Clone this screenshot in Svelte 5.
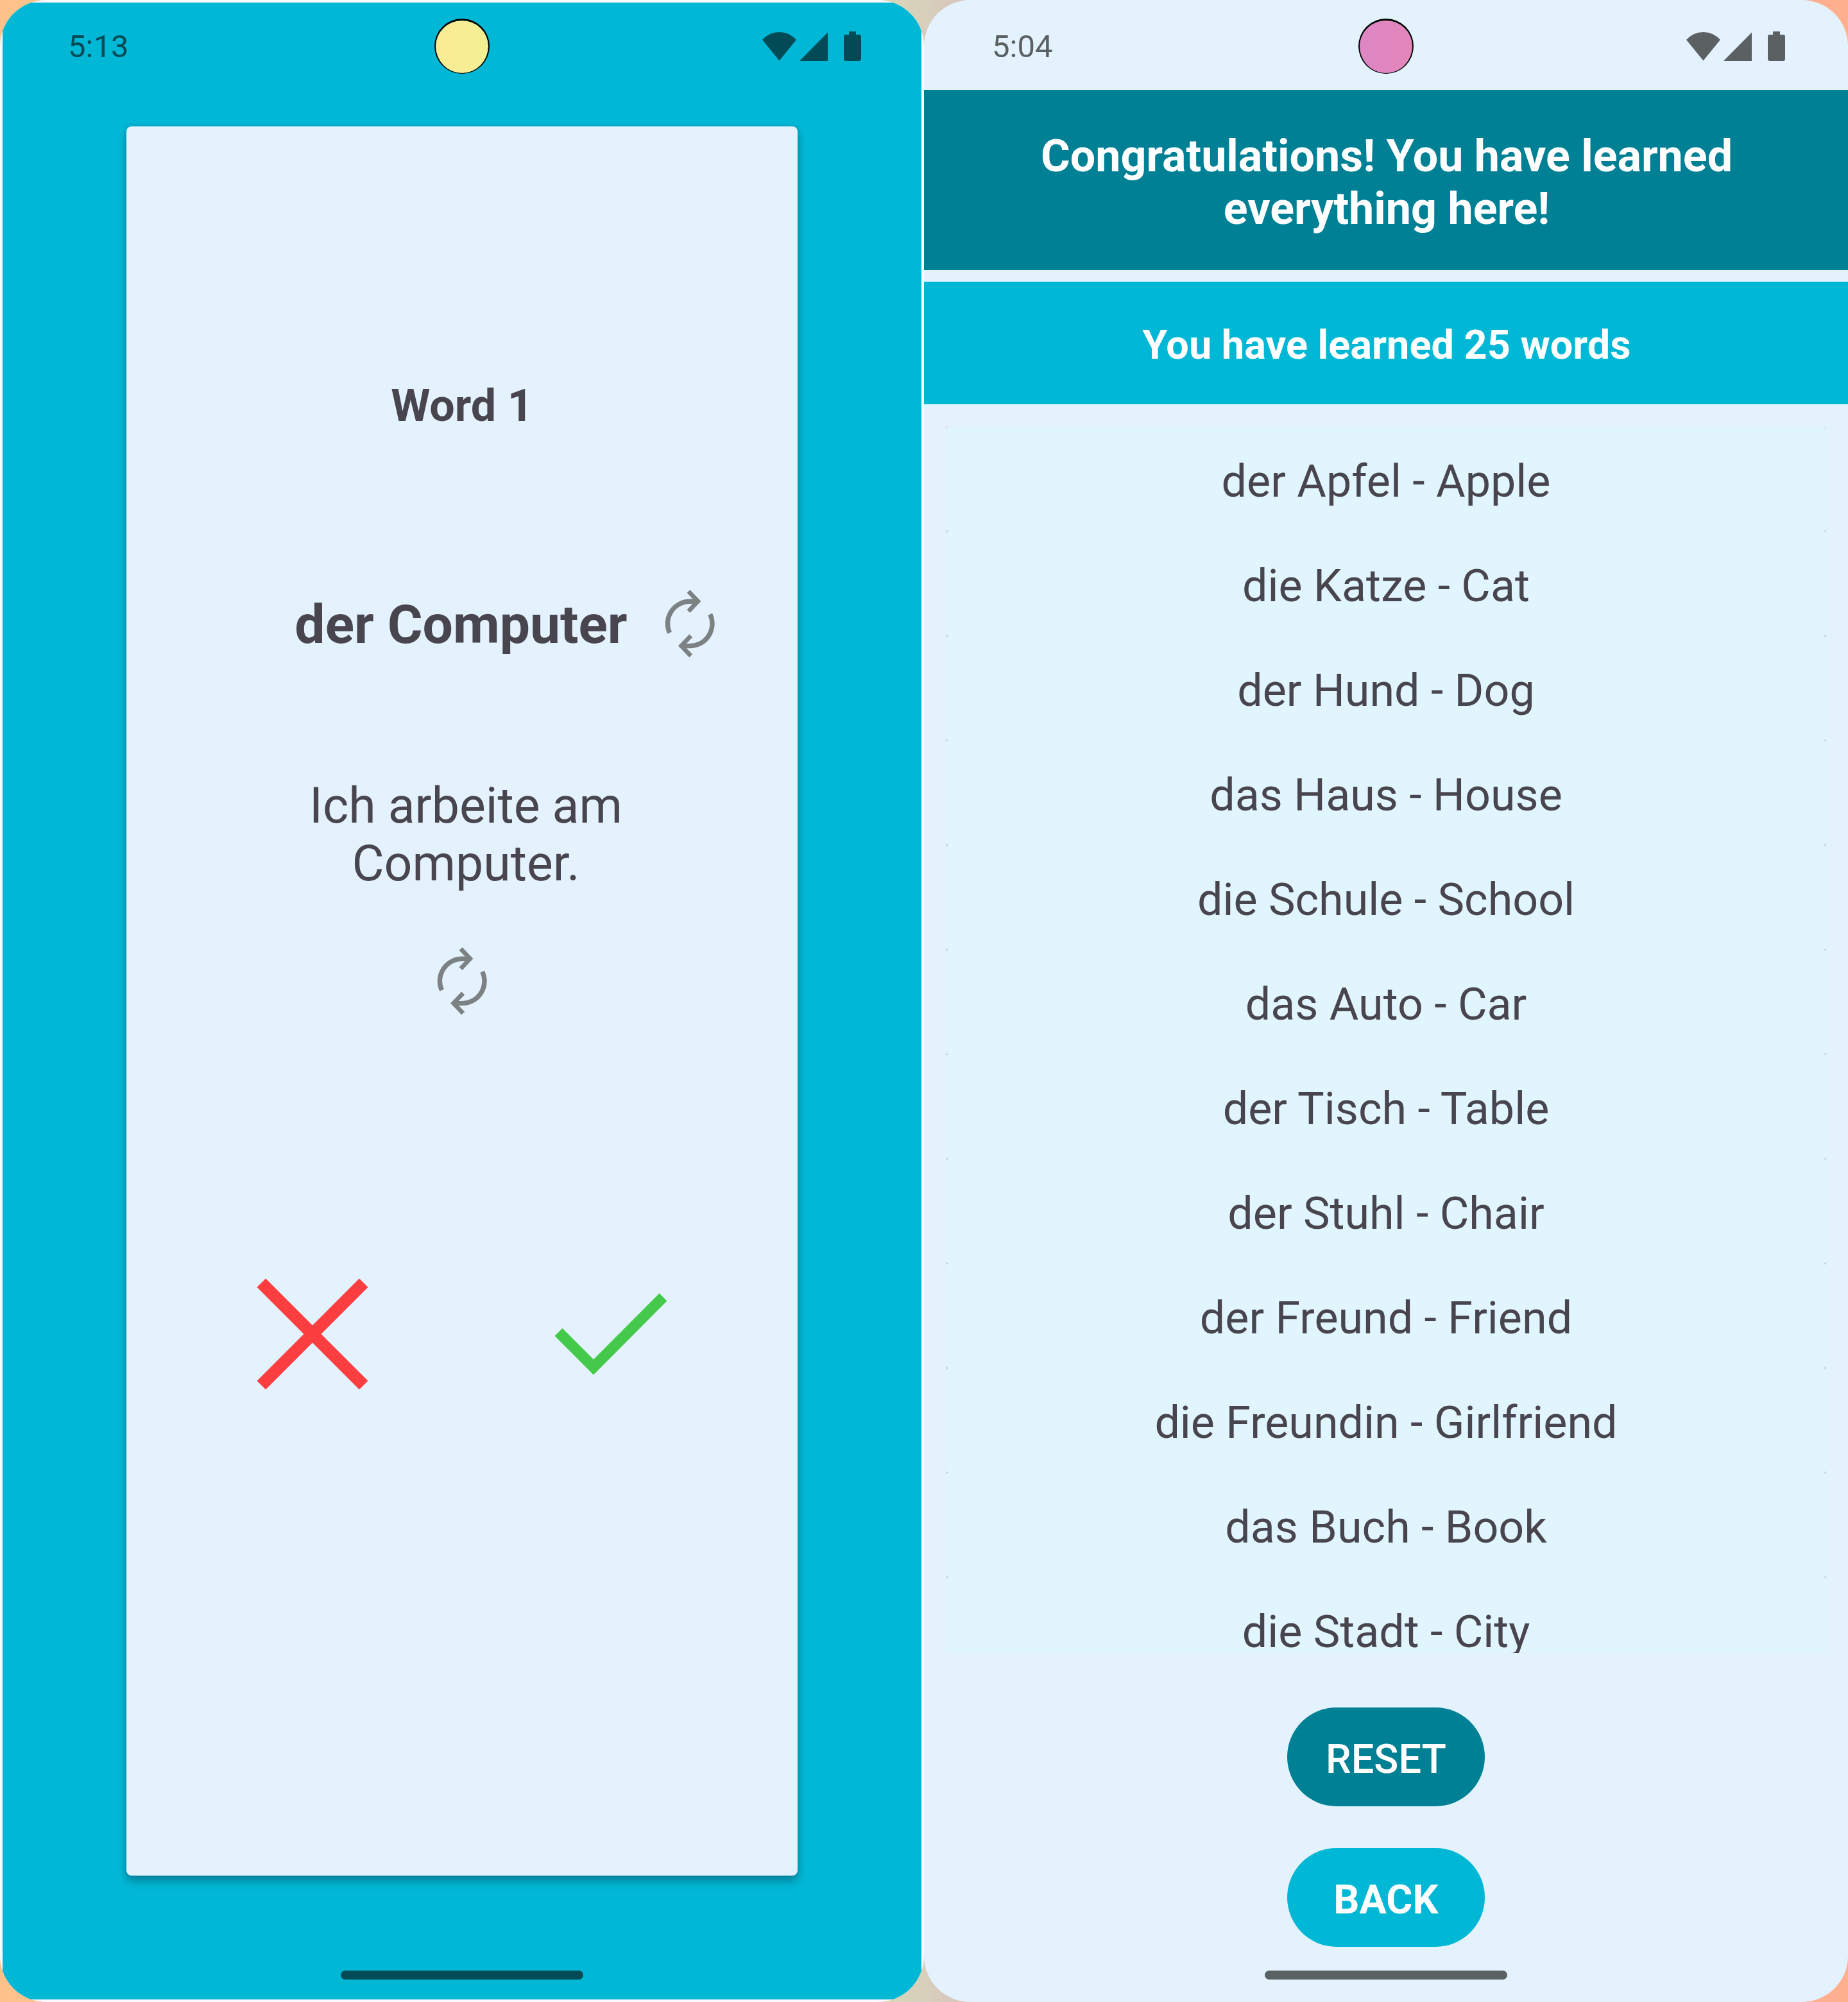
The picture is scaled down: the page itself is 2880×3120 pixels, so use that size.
<script>
  const words = [
    'der Apfel - Apple', 'die Katze - Cat', 'der Hund - Dog', 'das Haus - House',
    'die Schule - School', 'das Auto - Car', 'der Tisch - Table', 'der Stuhl - Chair',
    'der Freund - Friend', 'die Freundin - Girlfriend', 'das Buch - Book', 'die Stadt - City'
  ];
</script>

{#snippet statusBar(time)}
  <header class="status">
    <span class="clock">{time}</span>
    <i class="camera"></i>
    <svg class="signals" viewBox="0 0 156 48" fill="currentColor">
      <path d="M0 14Q11 2 26.500 2T53 14L26.500 46.500Z" />
      <path d="M102 2.500V47H58Z" />
      <path d="M135 1H146V6H151Q154 6 154 9V44Q154 47 151 47H130Q127 47 127 44V9Q127 6 130 6H135Z" />
    </svg>
  </header>
{/snippet}

{#snippet flipIcon()}
  <svg class="flip" viewBox="73.500 58.300 82 108" fill="none" stroke="#7c8184" stroke-width="7.400">
    <path d="M83 126.500A34.700 34.700 0 0 1 114.500 77.500H126" />
    <path d="M112.500 62L127.200 77.400L112.500 93" stroke-width="6.800" />
    <path d="M146.200 97.500A34.700 34.700 0 0 1 114.500 146.900H103" />
    <path d="M116.200 131.200L101.200 146.800L116.200 162.400" stroke-width="6.800" />
  </svg>
{/snippet}

<main>
  <section class="phone study">
    <div class="fill">
      {@render statusBar('5:13')}
      <article class="card">
        <h2>Word 1</h2>
        <div class="term"><span></span><h1>der Computer</h1>{@render flipIcon()}</div>
        <p>Ich arbeite am<br />Computer.</p>
        {@render flipIcon()}
        <div class="answers">
          <svg class="answer" viewBox="0 0 180 180" fill="none" stroke="#fc3e40" stroke-width="19.200">
            <path d="M10.300 10.300L169.700 169.700M169.700 10.300L10.300 169.700" />
          </svg>
          <svg class="answer" viewBox="0 0 180 180" fill="none" stroke="#44c94a" stroke-width="16.800">
            <path d="M8.500 87L63 141.500L171.500 32.500" />
          </svg>
        </div>
      </article>
      <i class="home"></i>
    </div>
  </section>

  <section class="phone learned">
    {@render statusBar('5:04')}
    <h2 class="congrats">Congratulations! You have learned<br />everything here!</h2>
    <h3 class="count">You have learned 25 words</h3>
    <ul>
      {#each words as word}
        <li>{word}</li>
      {/each}
    </ul>
    <button class="reset">RESET</button>
    <button class="back">BACK</button>
    <i class="home"></i>
  </section>
</main>

<style>
  :global(body) { margin: 0; }
  main {
    display: flex;
    width: 2880px;
    height: 3120px;
    overflow: hidden;
    font-family: Roboto, sans-serif;
    color: #49454f;
    background: linear-gradient(90deg, #ffc18a 0, #fdc48b 70px, #dad7b8 1370px, #d7cfbb 1440px, #d8c4bc 1510px, #feae90 2800px, #feb08f 2880px);
  }
  h1, h2, h3, p, ul { margin: 0; padding: 0; font-weight: 400; }
  .phone {
    box-sizing: border-box;
    width: 1440px;
    height: 3120px;
    border-radius: 72px;
    overflow: hidden;
    background: #e3f2fd;
    display: flex;
    flex-direction: column;
    align-items: center;
  }
  .study { background: #fef7ff; padding: 4px; --ink: #004b55; --lens: linear-gradient(90deg, #f9eb92, #f4ef92); }
  .learned { --ink: #5b6063; --lens: linear-gradient(90deg, #de87c4, #e385ba); }
  .fill {
    width: 1432px;
    height: 3112px;
    background: #00b8d6;
    display: flex;
    flex-direction: column;
    align-items: center;
  }
  .status {
    box-sizing: border-box;
    width: 1440px;
    height: 140px;
    flex: none;
    display: grid;
    grid-template-columns: 1fr 86px 1fr;
    align-items: center;
    padding: 4px 96px 0 106px;
    color: var(--ink);
  }
  .study .status { height: 136px; padding-top: 0; margin: 0 -4px; }
  .clock { font-size: 49px; line-height: 58px; padding-top: 2px; }
  .camera {
    box-sizing: border-box;
    width: 86px;
    height: 86px;
    margin-left: -5px;
    border: solid #000;
    border-width: 3px 2px 1px;
    border-radius: 50%;
    background: var(--lens) padding-box;
  }
  .signals { width: 156px; height: 48px; justify-self: end; }
  .card {
    width: 1046px;
    height: 2726px;
    margin-top: 57px;
    border-radius: 8px;
    background: #e3f2fd;
    box-shadow: 0 9px 14px rgba(0, 45, 60, 0.36), 0 0 9px rgba(0, 60, 70, 0.2);
    display: flex;
    flex-direction: column;
    align-items: center;
    flex: none;
  }
  .card h2 { font-size: 70px; line-height: 82px; font-weight: 700; margin-top: 394px; }
  .term {
    width: 791px;
    display: grid;
    grid-template-columns: 1fr auto 1fr;
    align-items: center;
    margin-top: 245px;
  }
  .term h1 { font-size: 84px; line-height: 105px; padding: 3px 3px 0 0; font-weight: 700; }
  .term .flip { justify-self: end; }
  .flip { width: 82px; height: 108px; flex: none; }
  .card p { font-size: 77px; line-height: 90px; text-align: center; margin: 185px 0 0 12px; }
  .card > .flip { margin-top: 84px; }
  .answers { display: flex; gap: 285px; margin-top: 406px; padding-right: 1px; }
  .answer { width: 180px; height: 180px; }
  .home { width: 378px; height: 14px; border-radius: 7px; background: var(--ink); flex: none; }
  .study .home { margin-top: 148px; }
  .congrats, .count {
    width: 1440px;
    box-sizing: border-box;
    flex: none;
    text-align: center;
    font-weight: 700;
    color: #fff;
    padding-left: 2px;
  }
  .congrats { height: 281px; padding-top: 62px; font-size: 70px; line-height: 82px; background: #008095; }
  .count { height: 191px; margin-top: 18px; font-size: 63px; line-height: 198px; background: #00b8d6; }
  ul { width: 1370px; height: 1911px; margin-top: 35px; overflow: hidden; list-style: none; background: #b4c1cd; flex: none; }
  li { height: 163px; line-height: 170px; border-radius: 4px; background: #e1f5fe; font-size: 70px; text-align: center; }
  button {
    width: 308px;
    height: 154px;
    padding: 7px 0 0;
    border: 0;
    border-radius: 77px;
    color: #fff;
    font: 500 63px/1 Roboto, sans-serif;
    flex: none;
  }
  .reset { margin-top: 85px; background: #008095; }
  .back { margin-top: 65px; background: #00b8d6; font-weight: 700; }
  .learned .home { margin-top: 37px; }
</style>
